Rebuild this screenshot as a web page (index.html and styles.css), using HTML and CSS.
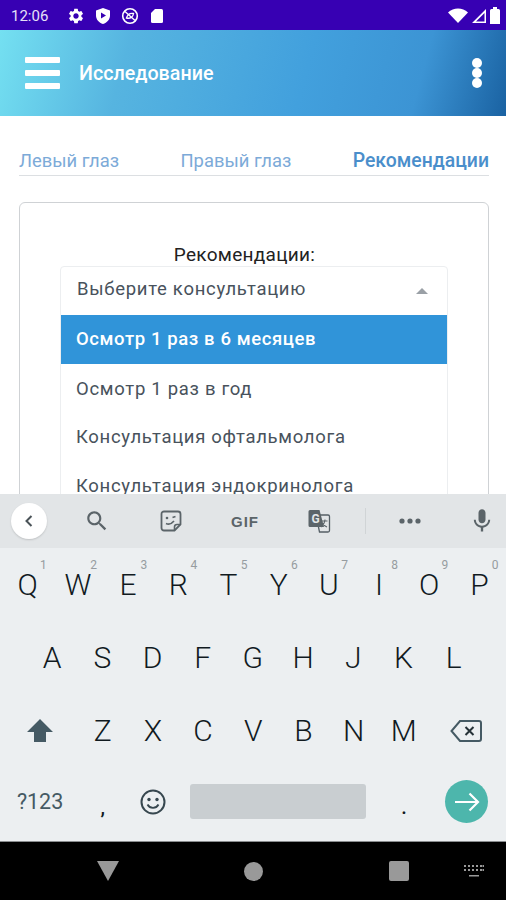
FILE: index.html
```html
<!DOCTYPE html>
<html lang="ru">
<head>
    <meta charset="UTF-8">
    <meta name="viewport" content="width=device-width, initial-scale=1.0">
    <title>Исследование</title>
    <link rel="stylesheet" href="styles.css">
</head>
<body>
    <div id="statusBar">
        <span class="clock">12:06</span>
        <div class="statusIcons">
            <svg width="18" height="18" viewBox="0 0 24 24"><path d="M19.14 12.94c.04-.3.06-.61.06-.94 0-.32-.02-.64-.07-.94l2.03-1.58a.49.49 0 0 0 .12-.61l-1.92-3.32a.488.488 0 0 0-.59-.22l-2.39.96c-.5-.38-1.03-.7-1.62-.94l-.36-2.54a.484.484 0 0 0-.48-.41h-3.84c-.24 0-.43.17-.47.41l-.36 2.54c-.59.24-1.13.57-1.62.94l-2.39-.96c-.22-.08-.47 0-.59.22L2.74 8.87c-.12.21-.08.47.12.61l2.03 1.58c-.05.3-.09.63-.09.94s.02.64.07.94l-2.03 1.58a.49.49 0 0 0-.12.61l1.92 3.32c.12.22.37.29.59.22l2.39-.96c.5.38 1.03.7 1.62.94l.36 2.54c.05.24.24.41.48.41h3.84c.24 0 .44-.17.47-.41l.36-2.54c.59-.24 1.13-.56 1.62-.94l2.39.96c.22.08.47 0 .59-.22l1.92-3.32c.12-.22.07-.47-.12-.61l-2.01-1.58zM12 15.6c-1.98 0-3.6-1.62-3.6-3.6s1.62-3.6 3.6-3.6 3.6 1.62 3.6 3.6-1.62 3.6-3.6 3.6z"/></svg>
            <svg width="18" height="18" viewBox="0 0 18 18"><path fill-rule="evenodd" d="M9 1l7 2.5v5c0 4-3 7.300-7 8.500-4-1.200-7-4.500-7-8.500v-5zM7 5.500v6l5-3z"/></svg>
            <svg width="18" height="18" viewBox="0 0 18 18"><circle cx="9" cy="9" r="7.300" class="iconLine" stroke-width="1.600"/><path d="M4 4.500l10 9" class="iconLine" stroke-width="1.400"/><path d="M5.500 11c1-3.500 4-5 7-4.500-.5 3.500-3 5.500-7 4.500z" class="iconLine" stroke-width="1.400"/></svg>
            <svg width="18" height="18" viewBox="0 0 18 18"><path d="M7 2h6.500A1.500 1.500 0 0 1 15 3.500v11a1.500 1.500 0 0 1-1.500 1.500h-9A1.500 1.500 0 0 1 3 14.500V6z"/></svg>
        </div>
        <div class="statusRight">
            <svg width="20" height="16" viewBox="0 0 20 16"><path d="M0 4.500C5.500-1 14.500-1 20 4.500L10 15z"/></svg>
            <svg width="16" height="16" viewBox="0 0 16 16"><path fill-rule="evenodd" d="M15 1v14H1zM13.500 5L5 13.500h8.500z"/></svg>
            <svg width="10" height="17" viewBox="0 0 10 17"><path d="M3 0h4v2h1.500A1.500 1.500 0 0 1 10 3.500V17H0V3.500A1.500 1.500 0 0 1 1.500 2H3z"/></svg>
        </div>
    </div>

    <div id="appBar">
        <div class="hamburger"><span></span><span></span><span></span></div>
        <div class="appTitle">Исследование</div>
        <div class="moreDots"><span></span><span></span><span></span></div>
    </div>

    <div id="content">
        <div class="tabs">
            <span class="tab">Левый глаз</span>
            <span class="tab">Правый глаз</span>
            <span class="tab tabActive">Рекомендации</span>
        </div>
        <div class="card">
            <div class="cardLabel">Рекомендации:</div>
            <div class="dropdown">
                <div class="dropdownHead">
                    <span>Выберите консультацию</span>
                    <span class="caret"></span>
                </div>
                <div class="option optionSelected">Осмотр 1 раз в 6 месяцев</div>
                <div class="option">Осмотр 1 раз в год</div>
                <div class="option">Консультация офтальмолога</div>
                <div class="option">Консультация эндокринолога</div>
            </div>
        </div>
    </div>

    <div id="kbToolbar">
        <div class="backCircle">
            <svg width="14" height="14" viewBox="0 0 14 14"><path d="M9.500 2L4.500 7l5 5" class="iconLine" stroke-width="2"/></svg>
        </div>
        <div class="tool">
            <svg width="26" height="26" viewBox="0 0 24 24"><path d="M15.500 14h-.79l-.28-.27C15.410 12.590 16 11.110 16 9.500 16 5.910 13.090 3 9.500 3S3 5.910 3 9.500 5.910 16 9.500 16c1.610 0 3.090-.59 4.230-1.570l.27.28v.79l5 4.990L20.490 19l-4.990-5zm-6 0C7.010 14 5 11.990 5 9.500S7.010 5 9.500 5 14 7.010 14 9.500 11.990 14 9.500 14z"/></svg>
        </div>
        <div class="tool">
            <svg width="22" height="22" viewBox="0 0 22 22"><path d="M4 1.500h14A2.500 2.500 0 0 1 20.500 4v10.500l-6 6H4A2.500 2.500 0 0 1 1.500 18V4A2.500 2.500 0 0 1 4 1.500z" class="iconLine" stroke-width="1.800"/><path d="M14.500 20.500V17a2.500 2.500 0 0 1 2.500-2.500h3.500" class="iconLine" stroke-width="1.600"/><circle cx="7" cy="8" r="1.300"/><path d="M12.500 7.500l3-1" class="iconLine" stroke-width="1.600"/><path d="M6 13.500c2.500 1.200 5.500.5 8-2.500" class="iconLine" stroke-width="1.600"/></svg>
        </div>
        <div class="tool gifLabel">GIF</div>
        <div class="tool">
            <svg width="24" height="24" viewBox="0 0 24 24"><path d="M9 6h12a1.500 1.500 0 0 1 1.500 1.500v14A1.500 1.500 0 0 1 21 23h-8.500z" fill="#e2e5e7" stroke="#555f66" stroke-width="1.300"/><path d="M3 1h9.500l4.500 17H3a1.500 1.500 0 0 1-1.500-1.500v-14A1.500 1.500 0 0 1 3 1z"/><text x="4.500" y="14" class="translateG">G</text><path d="M15 12h5.500M18 10.500c-.4 3.500-2 6-4 7.500M15.500 14c.8 1.800 2.200 3 4.500 4" class="iconLine" stroke-width="1.100"/></svg>
        </div>
        <div class="toolDivider"></div>
        <div class="tool">
            <svg width="24" height="8" viewBox="0 0 24 8"><circle cx="4" cy="4" r="2.600"/><circle cx="12" cy="4" r="2.600"/><circle cx="20" cy="4" r="2.600"/></svg>
        </div>
        <div class="tool micTool">
            <svg width="28" height="28" viewBox="0 0 24 24"><path d="M12 14c1.660 0 3-1.340 3-3V5c0-1.660-1.340-3-3-3S9 3.340 9 5v6c0 1.660 1.340 3 3 3zm5.300-3c0 3-2.540 5.100-5.300 5.100S6.700 14 6.700 11H5c0 3.410 2.720 6.230 6 6.720V21h2v-3.280c3.280-.48 6-3.300 6-6.720h-1.700z"/></svg>
        </div>
    </div>

    <div id="keyboard">
        <div class="keyRow">
            <div class="key">Q<sup class="keyNum">1</sup></div>
            <div class="key">W<sup class="keyNum">2</sup></div>
            <div class="key">E<sup class="keyNum">3</sup></div>
            <div class="key">R<sup class="keyNum">4</sup></div>
            <div class="key">T<sup class="keyNum">5</sup></div>
            <div class="key">Y<sup class="keyNum">6</sup></div>
            <div class="key">U<sup class="keyNum">7</sup></div>
            <div class="key">I<sup class="keyNum">8</sup></div>
            <div class="key">O<sup class="keyNum">9</sup></div>
            <div class="key">P<sup class="keyNum">0</sup></div>
        </div>
        <div class="keyRow keyRowMiddle">
            <div class="key">A</div>
            <div class="key">S</div>
            <div class="key">D</div>
            <div class="key">F</div>
            <div class="key">G</div>
            <div class="key">H</div>
            <div class="key">J</div>
            <div class="key">K</div>
            <div class="key">L</div>
        </div>
        <div class="keyRow">
            <div class="key keyWide">
                <svg width="28" height="26" viewBox="0 0 28 26"><path d="M14 1L27 14h-7v10H8V14H1z" fill="#455a64"/></svg>
            </div>
            <div class="key">Z</div>
            <div class="key">X</div>
            <div class="key">C</div>
            <div class="key">V</div>
            <div class="key">B</div>
            <div class="key">N</div>
            <div class="key">M</div>
            <div class="key keyWide">
                <svg width="32" height="24" viewBox="0 0 32 24"><path d="M10 2h19a2 2 0 0 1 2 2v16a2 2 0 0 1-2 2H10L1.500 12z" fill="none" stroke="#455a64" stroke-width="2"/><path d="M15.500 8l8 8m0-8l-8 8" fill="none" stroke="#263238" stroke-width="2"/></svg>
            </div>
        </div>
        <div class="keyRow keyRowBottom">
            <div class="key keyWide keySymbols">?123</div>
            <div class="key keyComma">,</div>
            <div class="key">
                <svg width="26" height="26" viewBox="0 0 26 26"><circle cx="13" cy="13" r="11.500" fill="none" stroke="#37474f" stroke-width="2"/><circle cx="9" cy="10.500" r="1.700" fill="#37474f"/><circle cx="17" cy="10.500" r="1.700" fill="#37474f"/><path d="M7.500 15.500c2.500 4.500 8.500 4.500 11 0" fill="none" stroke="#37474f" stroke-width="1.800"/></svg>
            </div>
            <div class="spaceKey"><div class="spaceBar"></div></div>
            <div class="key keyComma">.</div>
            <div class="key keyWide">
                <div class="enterBtn">
                    <svg width="26" height="20" viewBox="0 0 26 20"><path d="M1 10h23M15.500 1.500L24 10l-8.500 8.500" fill="none" stroke="#fff" stroke-width="2.200"/></svg>
                </div>
            </div>
        </div>
    </div>

    <div id="navBar">
        <svg class="navBack" width="22" height="20" viewBox="0 0 22 20"><path d="M0 0h22L11 20z"/></svg>
        <div class="navHome"></div>
        <div class="navRecent"></div>
        <svg class="navKeyboard" width="22" height="14" viewBox="0 0 22 14"><path d="M1 1h2v2H1zm4 0h2v2H5zm4 0h2v2H9zm4 0h2v2h-2zm4 0h2v2h-2zm2.500 0h1.500v2h-1.500zM1 5h2v2H1zm4 0h2v2H5zm4 0h2v2H9zm4 0h2v2h-2zm4 0h2v2h-2zm2.500 0h1.500v2h-1.500zM6 11h10v1.500H6z"/></svg>
    </div>
</body>
</html>
```

FILE: styles.css
```css
* {
    box-sizing: border-box;
}

body {
    font-family: Roboto, "Noto Sans", sans-serif;
    background-color: white;
    width: 506px;
    height: 900px;
    margin: 0;
    overflow: hidden;
}

svg {
    display: block;
}

.iconLine {
    fill: none;
    stroke: currentColor;
}

/* status bar */
#statusBar {
    height: 30px;
    background-color: #3700b3;
    color: white;
    display: flex;
    align-items: center;
    padding: 1px 6px 0 11px;
}

#statusBar svg {
    fill: white;
}

.clock {
    font-size: 15px;
    color: #e6e0f8;
    width: 56px;
}

.statusIcons {
    display: flex;
    gap: 9px;
}

.statusRight {
    margin-left: auto;
    display: flex;
    align-items: center;
    gap: 3px;
}

/* app bar */
#appBar {
    height: 86px;
    background: linear-gradient(105deg, #74e0f1 0%, #56b4e0 25%, #42a0dd 60%, #3c94d4 82%, #1a62a2 100%);
    display: flex;
    align-items: center;
    padding: 0 24px 0 25px;
    color: white;
}

.hamburger {
    width: 35px;
    display: flex;
    flex-direction: column;
    gap: 7px;
}

.hamburger span {
    height: 6px;
    background-color: white;
    border-radius: 1px;
}

.appTitle {
    margin-left: 19px;
    font-size: 19.7px;
    font-weight: 500;
    flex-grow: 1;
}

.moreDots {
    display: flex;
    flex-direction: column;
}

.moreDots span {
    width: 10px;
    height: 10px;
    border-radius: 50%;
    background-color: white;
}

/* content behind keyboard */
#content {
    height: 378px;
    overflow: hidden;
    padding: 0 17px 0 19px;
}

.tabs {
    display: flex;
    justify-content: space-between;
    align-items: baseline;
    height: 60px;
    padding-top: 33px;
    border-bottom: 1px solid #dcdfe2;
}

.tab {
    font-size: 18.4px;
    color: #7caad8;
}

.tabActive {
    font-size: 19.4px;
    font-weight: 500;
    color: #4a8ecb;
}

.card {
    margin-top: 26px;
    height: 400px;
    border: 1.5px solid #cfd2d5;
    border-radius: 6px;
    padding: 40px 40px 0;
}

.cardLabel {
    text-align: center;
    font-size: 19px;
    letter-spacing: 0.3px;
    color: #222;
    height: 23px;
    padding-right: 19px;
}

.dropdown {
    border: 1px solid #eceef0;
    border-radius: 4px;
    font-size: 18.5px;
    letter-spacing: 0.7px;
    color: #48525c;
}

.dropdownHead {
    height: 48px;
    display: flex;
    align-items: center;
    justify-content: space-between;
    padding: 0 19px 5px 16px;
}

.caret {
    width: 0;
    height: 0;
    border-left: 6px solid transparent;
    border-right: 6px solid transparent;
    border-bottom: 6px solid #9aa0a6;
    margin-top: 4px;
}

.option {
    height: 48.8px;
    display: flex;
    align-items: center;
    padding: 1px 0 0 15px;
}

.optionSelected {
    background-color: #3094d9;
    color: white;
    font-weight: 500;
    letter-spacing: 0.6px;
    padding-top: 0;
}

/* keyboard suggestion strip */
#kbToolbar {
    height: 54px;
    background-color: #e2e5e7;
    display: grid;
    grid-template-columns: 60px 74px 74px 74px 74px 18px 72px 60px;
    align-items: center;
    color: #5b6469;
    fill: #5b6469;
}

.backCircle {
    width: 36px;
    height: 36px;
    margin-left: 11px;
    border-radius: 50%;
    background-color: white;
    box-shadow: 0 1px 2px rgba(0, 0, 0, 0.15);
    display: flex;
    align-items: center;
    justify-content: center;
    color: #4a5358;
}

.tool {
    display: flex;
    align-items: center;
    justify-content: center;
}

.gifLabel {
    font-size: 15px;
    font-weight: 900;
    letter-spacing: 1px;
    font-family: "Liberation Sans", sans-serif;
}

.translateG {
    font-size: 12px;
    font-weight: 700;
    fill: #e2e5e7;
}

.toolDivider {
    width: 1px;
    height: 26px;
    background-color: #d0d4d6;
    justify-self: center;
}

.micTool {
    padding-left: 12px;
}

/* keys */
#keyboard {
    height: 294px;
    background-color: #eceff1;
    border-bottom: 1px solid #8a8d8f;
    display: grid;
    grid-template-rows: 73px 73px 73px 69px;
    padding-bottom: 5px;
}

.keyRow {
    display: flex;
    padding-left: 2.6px;
}

.keyRowMiddle {
    padding-left: 27px;
}

.key {
    position: relative;
    width: 50.2px;
    flex-shrink: 0;
    display: flex;
    align-items: center;
    justify-content: center;
    font-size: 30px;
    font-weight: 300;
    color: #111a1f;
}

.keyWide {
    width: 75px;
}

.keyNum {
    position: absolute;
    top: 10px;
    right: 6px;
    font-size: 12px;
    font-weight: 400;
    line-height: 14px;
    color: #969ca0;
}

.keySymbols {
    font-size: 21.5px;
    font-weight: 400;
    color: #455a64;
}

.keyComma {
    font-size: 20px;
    font-weight: 500;
    padding-top: 10px;
}

.spaceKey {
    width: 176px;
    margin: 0 13px 0 12px;
    display: flex;
    align-items: center;
}

.spaceBar {
    width: 100%;
    height: 35px;
    border-radius: 3px;
    background-color: #c9ced1;
}

.enterBtn {
    width: 43px;
    height: 43px;
    border-radius: 50%;
    background-color: #4db6ac;
    display: flex;
    align-items: center;
    justify-content: center;
}

/* android nav */
#navBar {
    height: 58px;
    background-color: black;
    display: flex;
    align-items: center;
    padding-left: 97px;
}

.navBack {
    fill: #999;
}

.navHome {
    width: 19px;
    height: 19px;
    margin-left: 125px;
    border-radius: 50%;
    background-color: #999;
}

.navRecent {
    width: 20px;
    height: 20px;
    margin-left: 126px;
    border-radius: 2px;
    background-color: #999;
}

.navKeyboard {
    fill: #999;
    margin-left: 54px;
}
```
